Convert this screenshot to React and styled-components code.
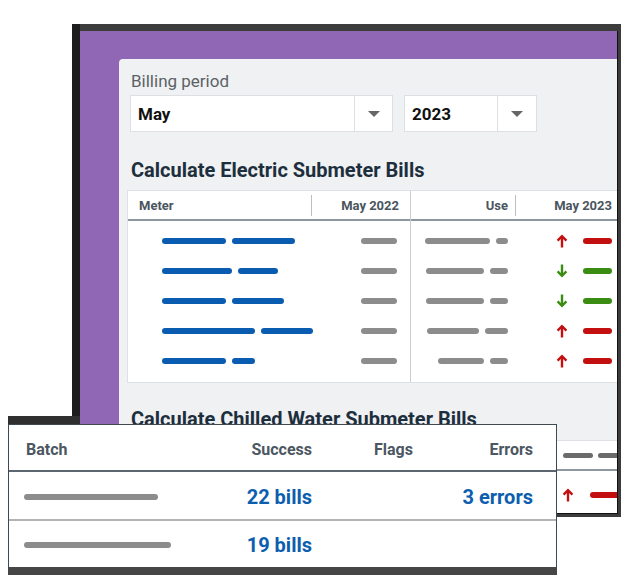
import React from "react";
import styled, { createGlobalStyle } from "styled-components";

const GlobalStyle = createGlobalStyle`
  html, body {
    margin: 0;
    padding: 0;
    background: #fff;
  }
  body {
    font-family: Roboto, "Liberation Sans", Arial, sans-serif;
  }
`;

const Stage = styled.div`
  position: relative;
  width: 621px;
  height: 587px;
  overflow: hidden;
  background: #fff;
`;

/* back window: dark frame, purple chrome, light panel */
const Window = styled.div`
  margin: 24px 0 0 72px;
  width: 549px;
  box-sizing: border-box;
  background: #3c3c3c;
  border-left: 8px solid #1d1d1d;
  padding: 7px 3px 3px 0;
`;

const Chrome = styled.div`
  background: #9067b4;
  padding: 28px 0 0 39px;
  border-right: 1px solid #111;
  border-bottom: 1px solid #111;
`;

const Panel = styled.div`
  height: 454px;
  box-sizing: border-box;
  background: #f0f1f3;
  border-top-left-radius: 4px;
  padding: 12px 0 0 8px;
  overflow: hidden;
`;

const Label = styled.div`
  margin-left: 4px;
  font-size: 17px;
  line-height: 20px;
  color: #5c6166;
`;

const Selects = styled.div`
  display: flex;
  gap: 11px;
  margin: 4px 0 0 3px;
`;

const Select = styled.div`
  display: flex;
  width: ${p => p.$w}px;
  height: 37px;
  box-sizing: border-box;
  background: #fff;
  border: 1px solid #dcdfe3;
`;

const SelectValue = styled.div`
  flex: 1;
  display: flex;
  align-items: center;
  padding-left: 7px;
  font-size: 17px;
  font-weight: 700;
  color: #111;
`;

const SelectArrow = styled.div`
  flex: none;
  width: ${p => p.$w}px;
  display: flex;
  align-items: center;
  justify-content: center;
  border-left: 1px solid #dcdfe3;

  &::after {
    content: "";
    border-left: 6px solid transparent;
    border-right: 6px solid transparent;
    border-top: 6px solid #666;
  }
`;

const Heading = styled.h2`
  margin: ${p => p.$top}px 0 0 4px;
  font-size: 20px;
  line-height: 24px;
  font-weight: 700;
  color: #1d2f3d;
  white-space: nowrap;
`;

const Table = styled.div`
  display: flex;
  width: ${p => (p.$w ? `${p.$w}px` : "auto")};
  flex: none;
  margin-top: ${p => p.$top}px;
  background: #fff;
  border: 1px solid #dde0e4;
  border-right: none;
`;

const Half = styled.div`
  flex: ${p => (p.$w ? "none" : 1)};
  width: ${p => (p.$w ? `${p.$w}px` : "auto")};
  border-left: ${p => (p.$divider ? "1px solid #c9ced3" : "none")};
`;

const HeadRow = styled.div`
  display: grid;
  grid-template-columns: ${p => p.$cols};
  align-items: center;
  height: 28px;
  border-bottom: 2px solid #8e979f;
`;

const HeadCell = styled.div`
  height: 21px;
  display: flex;
  align-items: center;
  justify-content: ${p => (p.$right ? "flex-end" : "flex-start")};
  gap: 5px;
  padding: 0 ${p => p.$pr || 0}px 0 ${p => p.$pl || 0}px;
  border-left: ${p => (p.$sep ? "1px solid #b9bfc5" : "none")};
  font-size: 13px;
  font-weight: 700;
  color: #4a5560;
  white-space: nowrap;
`;

const Body = styled.div`
  padding: ${p => p.$pad};
`;

const Row = styled.div`
  display: grid;
  grid-template-columns: ${p => p.$cols};
  align-items: center;
  height: 30px;
`;

const Cell = styled.div`
  display: flex;
  align-items: center;
  justify-content: ${p => (p.$right ? "flex-end" : "flex-start")};
  gap: ${p => (p.$gap != null ? p.$gap : 6)}px;
  padding: 0 ${p => p.$pr || 0}px 0 ${p => p.$pl || 0}px;
  white-space: nowrap;
`;

const Bar = styled.span`
  flex: none;
  display: block;
  width: ${p => p.$w}px;
  height: ${p => p.$h || 6}px;
  border-radius: 3px;
  background: ${p => p.$c};
`;

/* front batch card */
const BatchCard = styled.div`
  position: absolute;
  left: 8px;
  top: 424px;
  width: 549px;
  box-sizing: border-box;
  background: #fff;
  border: 1px solid #3e4952;
  border-bottom: 8px solid #464646;
`;

const CardTab = styled.div`
  position: absolute;
  left: -1px;
  top: -9px;
  width: 72px;
  height: 8px;
  background: #2f2f2f;
`;

const BatchRow = styled.div`
  display: grid;
  grid-template-columns: 191px 112px 128px 93px 1fr;
  align-items: center;
  height: ${p => p.$h}px;
  border-bottom: ${p => p.$line || "none"};
`;

const BatchHead = styled.div`
  padding: 3px 0 0 ${p => p.$pl || 0}px;
  text-align: ${p => (p.$right ? "right" : "left")};
  font-size: 16px;
  font-weight: 700;
  color: #4c5762;
  white-space: nowrap;
`;

const BatchValue = styled.div`
  padding: 2px 0 0 ${p => p.$pl || 0}px;
  text-align: ${p => (p.$right ? "right" : "left")};
  font-size: 20px;
  font-weight: 700;
  color: #0d5eae;
  white-space: nowrap;
`;

const BatchBar = styled.div`
  padding: 2px 0 0 15px;
`;

const BLUE = "#0a5cb0";
const GRAY = "#8c8c8c";
const DARKGRAY = "#6b6b6b";
const RED = "#c30f0f";
const GREEN = "#3a8c12";

function Arrow({ dir }) {
  const color = dir === "up" ? RED : GREEN;
  return (
    <svg width="12" height="14" viewBox="0 0 12 14" style={{ flex: "none" }}>
      <g
        transform={dir === "up" ? undefined : "rotate(180 6 7)"}
        fill="none"
        stroke={color}
        strokeWidth="2.4"
      >
        <path d="M6 13.5V2.2" />
        <path d="M1.6 6.6L6 2.2l4.4 4.4" />
      </g>
    </svg>
  );
}

const meterRows = [
  { meter: [64, 63], prev: 36, use: [65, 12], dir: "up" },
  { meter: [70, 40], prev: 36, use: [58, 18], dir: "down" },
  { meter: [64, 52], prev: 36, use: [58, 18], dir: "down" },
  { meter: [93, 52], prev: 36, use: [52, 23], dir: "up" },
  { meter: [64, 23], prev: 36, use: [46, 18], dir: "up" }
];

const chilledRows = [
  { meter: [70, 52], prev: 36, use: [60, 18], dir: "up" },
  { meter: [64, 40], prev: 36, use: [52, 18], dir: "up" }
];

const LEFT_COLS = "183px 99px";
const RIGHT_COLS = "104px 1fr";
const RIGHT_COLS_2 = "142px 1fr";

function ElectricTable() {
  return (
    <Table $top={8}>
      <Half $w={282}>
        <HeadRow $cols={LEFT_COLS}>
          <HeadCell $pl={11}>Meter</HeadCell>
          <HeadCell $sep $right $pr={11}>
            May 2022
          </HeadCell>
        </HeadRow>
        <Body $pad="5px 0 6px">
          {meterRows.map((r, i) => (
            <Row key={i} $cols={LEFT_COLS}>
              <Cell $pl={34}>
                <Bar $w={r.meter[0]} $c={BLUE} />
                <Bar $w={r.meter[1]} $c={BLUE} />
              </Cell>
              <Cell $right $pr={13}>
                <Bar $w={r.prev} $c={GRAY} />
              </Cell>
            </Row>
          ))}
        </Body>
      </Half>
      <Half $divider>
        <HeadRow $cols={RIGHT_COLS}>
          <HeadCell $right $pr={7}>
            Use
          </HeadCell>
          <HeadCell $sep $right $pr={5}>
            May 2023
          </HeadCell>
        </HeadRow>
        <Body $pad="5px 0 6px">
          {meterRows.map((r, i) => (
            <Row key={i} $cols={RIGHT_COLS}>
              <Cell $right $pr={7}>
                <Bar $w={r.use[0]} $c={GRAY} />
                <Bar $w={r.use[1]} $c={GRAY} />
              </Cell>
              <Cell $pl={41} $gap={15}>
                <Arrow dir={r.dir} />
                <Bar $w={29} $c={r.dir === "up" ? RED : GREEN} />
              </Cell>
            </Row>
          ))}
        </Body>
      </Half>
    </Table>
  );
}

function ChilledTable() {
  return (
    <Table $top={9} $w={520}>
      <Half $w={282}>
        <HeadRow $cols={LEFT_COLS}>
          <HeadCell $pl={11}>
            <Bar $w={40} $h={5} $c={DARKGRAY} />
          </HeadCell>
          <HeadCell $sep $right $pr={11}>
            <Bar $w={30} $h={5} $c={DARKGRAY} />
            <Bar $w={30} $h={5} $c={DARKGRAY} />
          </HeadCell>
        </HeadRow>
        <Body $pad="9px 0 6px">
          {chilledRows.map((r, i) => (
            <Row key={i} $cols={LEFT_COLS}>
              <Cell $pl={34}>
                <Bar $w={r.meter[0]} $c={BLUE} />
                <Bar $w={r.meter[1]} $c={BLUE} />
              </Cell>
              <Cell $right $pr={13}>
                <Bar $w={r.prev} $c={GRAY} />
              </Cell>
            </Row>
          ))}
        </Body>
      </Half>
      <Half $divider>
        <HeadRow $cols={RIGHT_COLS_2}>
          <HeadCell $right $pr={7}>
            <Bar $w={24} $h={5} $c={DARKGRAY} />
          </HeadCell>
          <HeadCell $pl={10}>
            <Bar $w={30} $h={5} $c={DARKGRAY} />
            <Bar $w={30} $h={5} $c={DARKGRAY} />
          </HeadCell>
        </HeadRow>
        <Body $pad="9px 0 6px">
          {chilledRows.map((r, i) => (
            <Row key={i} $cols={RIGHT_COLS_2}>
              <Cell $right $pr={7}>
                <Bar $w={r.use[0]} $c={GRAY} />
                <Bar $w={r.use[1]} $c={GRAY} />
              </Cell>
              <Cell $pl={9} $gap={16}>
                <Arrow dir={r.dir} />
                <Bar $w={40} $c={RED} />
              </Cell>
            </Row>
          ))}
        </Body>
      </Half>
    </Table>
  );
}

function BillingWindow() {
  return (
    <Window>
      <Chrome>
        <Panel>
          <Label>Billing period</Label>
          <Selects>
            <Select $w={263}>
              <SelectValue>May</SelectValue>
              <SelectArrow $w={37} />
            </Select>
            <Select $w={133}>
              <SelectValue>2023</SelectValue>
              <SelectArrow $w={38} />
            </Select>
          </Selects>
          <Heading $top={26}>Calculate Electric Submeter Bills</Heading>
          <ElectricTable />
          <Heading $top={24}>Calculate Chilled Water Submeter Bills</Heading>
          <ChilledTable />
        </Panel>
      </Chrome>
    </Window>
  );
}

function BatchTable() {
  return (
    <BatchCard>
      <CardTab />
      <BatchRow $h={45} $line="2px solid #5b6670">
        <BatchHead $pl={17}>Batch</BatchHead>
        <BatchHead $right>Success</BatchHead>
        <BatchHead $pl={62}>Flags</BatchHead>
        <BatchHead $right>Errors</BatchHead>
      </BatchRow>
      <BatchRow $h={47} $line="2px solid #b3b3b3">
        <BatchBar>
          <Bar $w={134} $c={GRAY} />
        </BatchBar>
        <BatchValue $right>22 bills</BatchValue>
        <div />
        <BatchValue $right>3 errors</BatchValue>
      </BatchRow>
      <BatchRow $h={46}>
        <BatchBar>
          <Bar $w={147} $c={GRAY} />
        </BatchBar>
        <BatchValue $right>19 bills</BatchValue>
        <div />
        <div />
      </BatchRow>
    </BatchCard>
  );
}

export default function App() {
  return (
    <Stage>
      <GlobalStyle />
      <BillingWindow />
      <BatchTable />
    </Stage>
  );
}
